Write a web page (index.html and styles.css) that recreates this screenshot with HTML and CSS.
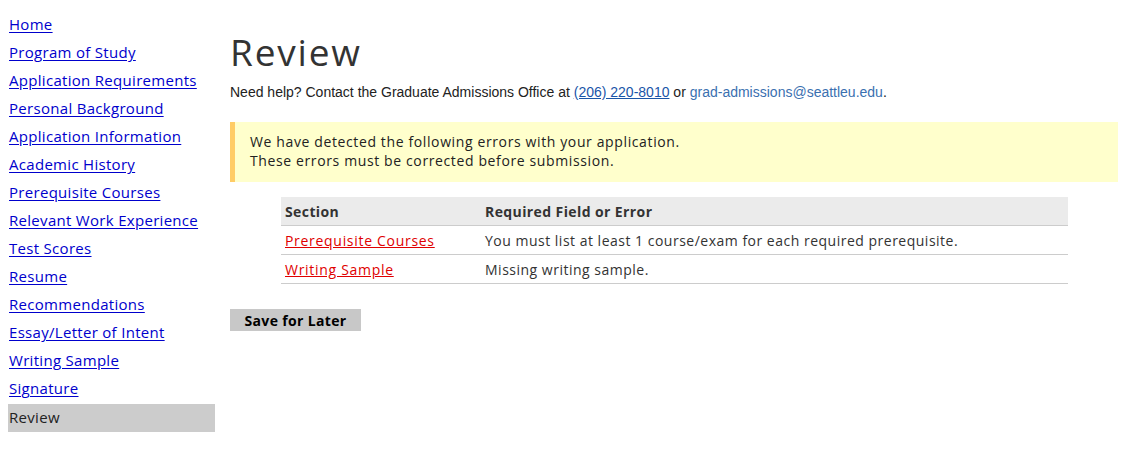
FILE: index.html
```html
<!DOCTYPE html>
<html lang="en">
<head>
<meta charset="utf-8">
<title>Review</title>
<link rel="stylesheet" href="styles.css">
</head>
<body>
<div class="page">
  <nav class="sidebar">
    <a class="nav-item" href="#">Home</a>
    <a class="nav-item" href="#">Program of Study</a>
    <a class="nav-item" href="#">Application Requirements</a>
    <a class="nav-item" href="#">Personal Background</a>
    <a class="nav-item" href="#">Application Information</a>
    <a class="nav-item" href="#">Academic History</a>
    <a class="nav-item" href="#">Prerequisite Courses</a>
    <a class="nav-item" href="#">Relevant Work Experience</a>
    <a class="nav-item" href="#">Test Scores</a>
    <a class="nav-item" href="#">Resume</a>
    <a class="nav-item" href="#">Recommendations</a>
    <a class="nav-item" href="#">Essay/Letter of Intent</a>
    <a class="nav-item" href="#">Writing Sample</a>
    <a class="nav-item" href="#">Signature</a>
    <span class="nav-item nav-current">Review</span>
  </nav>
  <main class="main">
    <h1 class="title">Review</h1>
    <p class="help">Need help? Contact the Graduate Admissions Office at <a class="phone" href="#">(206) 220-8010</a> or <a class="email" href="#">grad-admissions@seattleu.edu</a>.</p>
    <div class="alert">
      We have detected the following errors with your application.<br>
      These errors must be corrected before submission.
    </div>
    <table class="errors">
      <thead>
        <tr><th class="col-section">Section</th><th>Required Field or Error</th></tr>
      </thead>
      <tbody>
        <tr><td><a class="err-link" href="#">Prerequisite Courses</a></td><td>You must list at least 1 course/exam for each required prerequisite.</td></tr>
        <tr><td><a class="err-link" href="#">Writing Sample</a></td><td>Missing writing sample.</td></tr>
      </tbody>
    </table>
    <button class="save" type="button">Save for Later</button>
  </main>
</div>
</body>
</html>
```

FILE: styles.css
```css
body {
  margin: 8px;
  background: #fff;
  font-family: "Open Sans", "DejaVu Sans", sans-serif;
  color: #222;
}

.page {
  display: flex;
  gap: 15px;
}

.sidebar {
  width: 207px;
  flex: none;
  display: flex;
  flex-direction: column;
  padding-top: 4px;
}

.nav-item {
  display: block;
  height: 24px;
  line-height: 24px;
  padding: 0 0 4px 1px;
  font-size: 15px;
  letter-spacing: 0.3px;
  color: #0000cc;
  text-decoration: underline;
  text-underline-offset: 2px;
  white-space: nowrap;
}

.nav-current {
  height: 26px;
  line-height: 26px;
  padding-bottom: 2px;
  background: #cccccc;
  color: #222;
  text-decoration: none;
}

.main {
  flex: 1;
  padding-right: 14px;
}

.title {
  font-size: 37px;
  font-weight: 400;
  letter-spacing: 1.8px;
  color: #333;
  margin: 22px 0 0;
  line-height: 44px;
}

.help {
  font-family: "Liberation Sans", Arial, sans-serif;
  font-size: 14px;
  color: #222;
  margin: 9px 0 0;
  line-height: 18px;
}

.phone {
  color: #1a55a8;
  text-decoration: underline;
}

.email {
  color: #3a70b0;
  text-decoration: none;
}

.alert {
  margin-top: 21px;
  background: #ffffcc;
  border-left: 5px solid #ffcc66;
  padding: 10px 15px 12px;
  font-size: 14px;
  line-height: 19px;
  letter-spacing: 0.62px;
  color: #222;
}

.errors {
  margin: 15px 50px 0 51px;
  width: calc(100% - 101px);
  border-collapse: collapse;
  font-size: 14px;
  color: #333;
}

.errors th {
  background: #ebebeb;
  text-align: left;
  font-weight: 700;
  letter-spacing: 0.4px;
  height: 28px;
  padding: 0 4px;
  border-bottom: 1px solid #cccccc;
}

.errors .col-section {
  width: 192px;
}

.errors td {
  height: 28px;
  padding: 0 4px;
  letter-spacing: 0.5px;
  border-bottom: 1px solid #cccccc;
}

.err-link {
  color: #e00000;
  letter-spacing: 0.7px;
  text-decoration: underline;
}

.save {
  display: block;
  margin-top: 25px;
  width: 131px;
  height: 22px;
  background: #c8c8c8;
  border: none;
  border-radius: 0;
  padding: 0;
  font-family: "Open Sans", "DejaVu Sans", sans-serif;
  font-size: 14px;
  font-weight: 700;
  letter-spacing: 0.35px;
  color: #000;
}
```
